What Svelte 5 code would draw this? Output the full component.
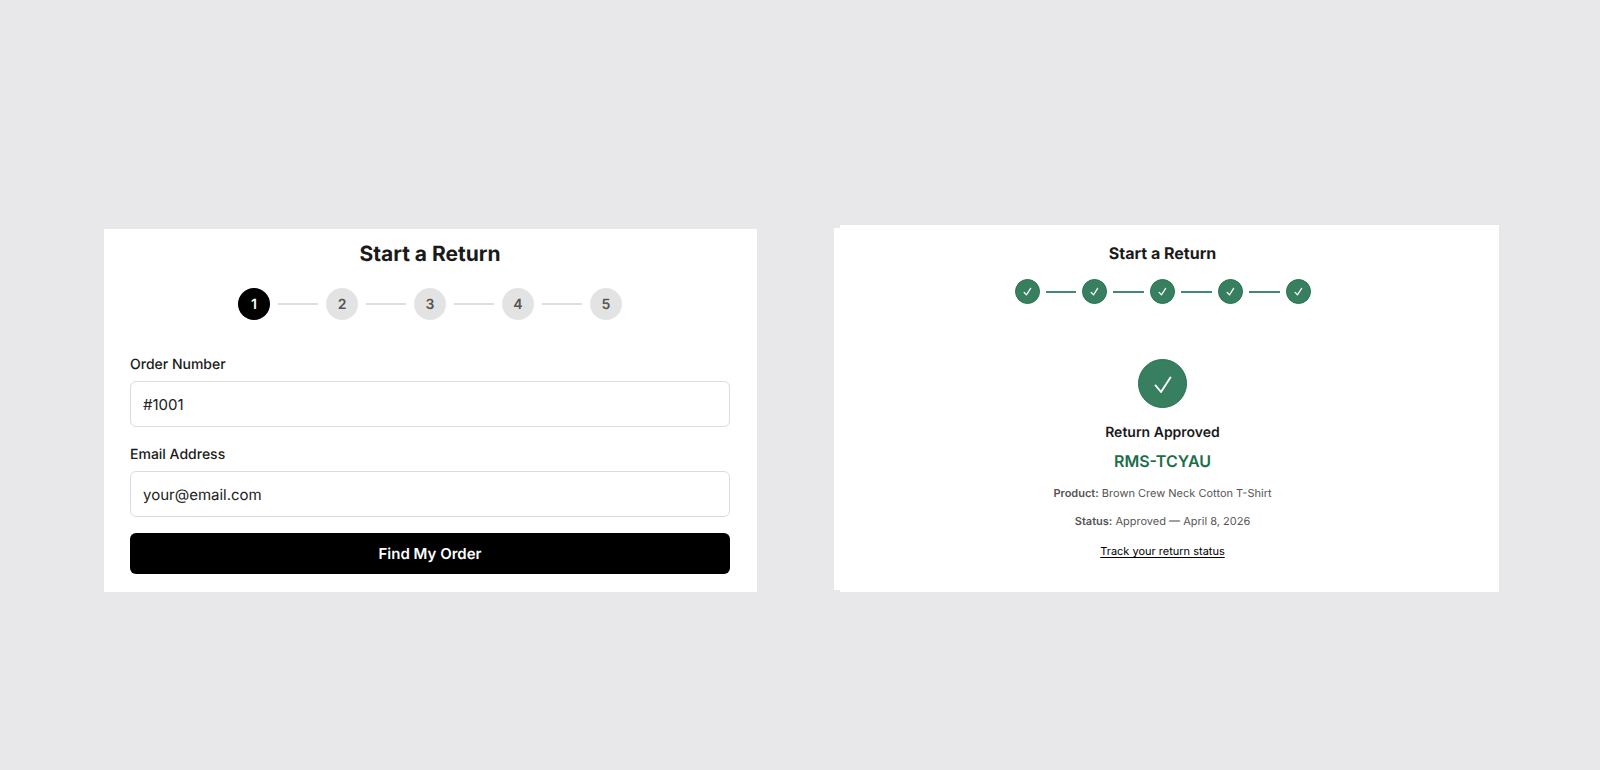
<script>
	let orderNumber = '';
	let email = '';

	const steps = [1, 2, 3, 4, 5];
	const current = 1;
</script>

<main>
	<section class="panel lookup">
		<h1>Start a Return</h1>

		<ol class="steps">
			{#each steps as step}
				{#if step > 1}
					<li class="line" aria-hidden="true"></li>
				{/if}
				<li class="dot" class:active={step === current}>{step}</li>
			{/each}
		</ol>

		<form on:submit|preventDefault>
			<label for="order">Order Number</label>
			<input id="order" type="text" placeholder="#1001" bind:value={orderNumber} />

			<label for="email">Email Address</label>
			<input id="email" type="email" placeholder="your@email.com" bind:value={email} />

			<button type="submit">Find My Order</button>
		</form>
	</section>

	<section class="panel result">
		<h2>Start a Return</h2>

		<ol class="steps done">
			{#each steps as step}
				{#if step > 1}
					<li class="line" aria-hidden="true"></li>
				{/if}
				<li class="dot" aria-label="Step {step} complete">
					<svg viewBox="0 0 16 16" width="9" height="9" aria-hidden="true">
						<path d="M2 9.5 6.2 14 13.6 2.4" stroke-width="2.2" />
					</svg>
				</li>
			{/each}
		</ol>

		<div class="badge">
			<svg viewBox="0 0 18 18" width="18" height="18" aria-hidden="true">
				<path d="M1.5 10.4 7 17 16.4 2.5" stroke-width="1.9" />
			</svg>
		</div>
		<h3>Return Approved</h3>
		<p class="code">RMS-TCYAU</p>
		<p class="detail"><strong>Product:</strong> Brown Crew Neck Cotton T-Shirt</p>
		<p class="detail"><strong>Status:</strong> Approved — April 8, 2026</p>
		<a href="#status">Track your return status</a>
	</section>
</main>

<style>
	:global(body) {
		background: #e8e8ea;
	}

	main {
		display: grid;
		grid-template-columns: 653fr 659fr;
		gap: 83px;
		align-items: end;
		padding: 225px 101px 48px 104px;
		font-family: Inter, 'Liberation Sans', sans-serif;
		color: #1a1a1a;
		text-rendering: geometricPrecision;
	}

	.panel {
		position: relative;
		box-sizing: border-box;
		background: #fff;
	}

	h1,
	h2,
	h3,
	p,
	ol {
		margin: 0;
		padding: 0;
	}

	.lookup {
		padding: 12px 27px 18px 26px;
	}

	h1 {
		font-size: 21px;
		line-height: 28px;
		font-weight: 700;
		text-align: center;
	}

	.steps {
		display: flex;
		align-items: center;
		justify-content: center;
		gap: 8px;
		margin-top: 19px;
		list-style: none;
	}

	.dot {
		display: flex;
		flex: none;
		align-items: center;
		justify-content: center;
		width: 32px;
		height: 32px;
		border-radius: 50%;
		background: #e3e3e3;
		color: #555;
		font-size: 14px;
		font-weight: 600;
	}

	.dot.active {
		background: #000;
		color: #fff;
	}

	.line {
		width: 40px;
		height: 2px;
		background: #dedede;
	}

	form {
		display: flex;
		flex-direction: column;
		margin-top: 34px;
	}

	label {
		margin-bottom: 6px;
		font-size: 14px;
		line-height: 21px;
		font-weight: 500;
	}

	input {
		box-sizing: border-box;
		width: 100%;
		height: 46px;
		margin: 0 0 17px;
		padding: 0 12px;
		border: 1px solid #dcdcdc;
		border-radius: 6px;
		background: #fff;
		color: #1a1a1a;
		font: inherit;
		font-size: 15px;
		text-rendering: inherit;
	}

	input:last-of-type {
		margin-bottom: 16px;
	}

	input::placeholder {
		color: #222;
		opacity: 1;
	}

	button {
		height: 41px;
		border: 0;
		border-radius: 6px;
		background: #000;
		color: #fff;
		font: inherit;
		font-size: 15px;
		font-weight: 600;
		text-rendering: inherit;
		cursor: pointer;
	}

	.result {
		display: flex;
		flex-direction: column;
		align-items: center;
		padding: 18px 14px 34px 0;
	}

	/* narrow edge of the card underneath */
	.result::before {
		content: '';
		position: absolute;
		top: 3px;
		bottom: 2px;
		left: -6px;
		width: 6px;
		background: #fff;
	}

	h2 {
		font-size: 16px;
		line-height: 20px;
		font-weight: 700;
	}

	.steps.done {
		gap: 6px;
		width: 296px;
		margin-top: 16px;
	}

	.done .dot {
		width: 25px;
		height: 25px;
	}

	.done .dot,
	.badge {
		box-sizing: border-box;
		border: 1px solid #237350;
		background: #387f60;
	}

	.done .line {
		flex: 1;
		background: #438a6c;
	}

	svg {
		fill: none;
		stroke: #fff;
		stroke-linecap: round;
		stroke-linejoin: round;
	}

	.badge {
		display: flex;
		align-items: center;
		justify-content: center;
		width: 49px;
		height: 49px;
		margin-top: 55px;
		border-radius: 50%;
	}

	h3 {
		margin-top: 15px;
		font-size: 14px;
		line-height: 20px;
		font-weight: 600;
	}

	.code {
		margin-top: 8px;
		color: #1b6e4a;
		font-size: 16px;
		line-height: 20px;
		font-weight: 600;
	}

	.detail {
		margin-top: 14px;
		color: #555;
		font-size: 11px;
		line-height: 14px;
	}

	.code + .detail {
		margin-top: 15px;
	}

	.detail strong {
		font-weight: 600;
	}

	.result a {
		margin-top: 16px;
		color: #000;
		font-size: 11px;
		line-height: 14px;
		text-underline-offset: 2px;
	}
</style>
